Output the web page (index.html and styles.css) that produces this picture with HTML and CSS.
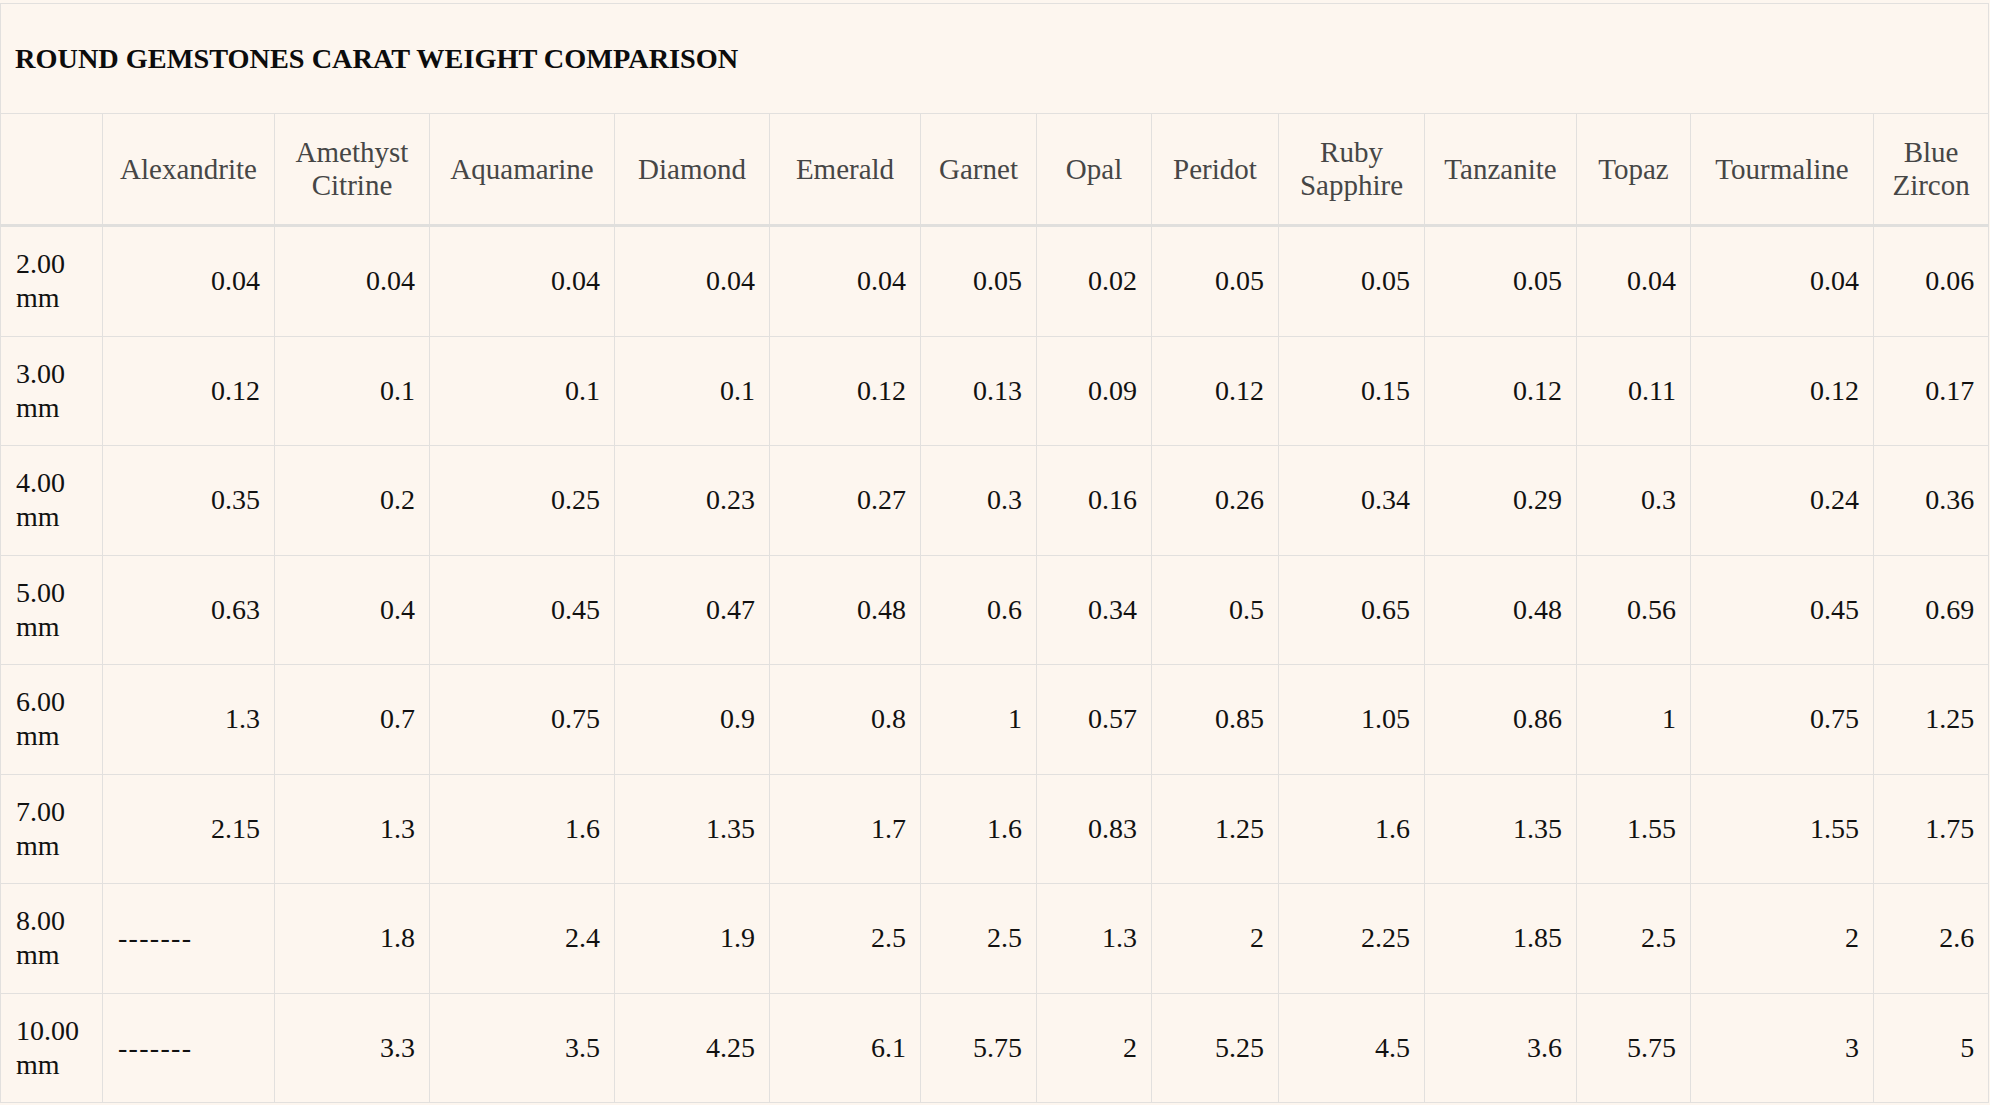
FILE: index.html
```html
<!DOCTYPE html>
<html lang="en">
<head>
<meta charset="utf-8">
<title>Round Gemstones Carat Weight Comparison</title>
<link rel="stylesheet" href="styles.css">
</head>
<body>
<table class="gems">
  <colgroup>
    <col class="c-size">
    <col class="c-alex">
    <col class="c-amet">
    <col class="c-aqua">
    <col class="c-diam">
    <col class="c-emer">
    <col class="c-garn">
    <col class="c-opal">
    <col class="c-peri">
    <col class="c-ruby">
    <col class="c-tanz">
    <col class="c-topa">
    <col class="c-tour">
    <col class="c-zirc">
  </colgroup>
  <thead>
    <tr class="title-row"><th class="title" colspan="14">ROUND GEMSTONES CARAT WEIGHT COMPARISON</th></tr>
    <tr class="head-row">
      <th></th>
      <th>Alexandrite</th>
      <th>Amethyst Citrine</th>
      <th>Aquamarine</th>
      <th>Diamond</th>
      <th>Emerald</th>
      <th>Garnet</th>
      <th>Opal</th>
      <th>Peridot</th>
      <th>Ruby Sapphire</th>
      <th>Tanzanite</th>
      <th>Topaz</th>
      <th>Tourmaline</th>
      <th>Blue Zircon</th>
    </tr>
  </thead>
  <tbody>
    <tr><td class="size">2.00 mm</td><td>0.04</td><td>0.04</td><td>0.04</td><td>0.04</td><td>0.04</td><td>0.05</td><td>0.02</td><td>0.05</td><td>0.05</td><td>0.05</td><td>0.04</td><td>0.04</td><td>0.06</td></tr>
    <tr><td class="size">3.00 mm</td><td>0.12</td><td>0.1</td><td>0.1</td><td>0.1</td><td>0.12</td><td>0.13</td><td>0.09</td><td>0.12</td><td>0.15</td><td>0.12</td><td>0.11</td><td>0.12</td><td>0.17</td></tr>
    <tr><td class="size">4.00 mm</td><td>0.35</td><td>0.2</td><td>0.25</td><td>0.23</td><td>0.27</td><td>0.3</td><td>0.16</td><td>0.26</td><td>0.34</td><td>0.29</td><td>0.3</td><td>0.24</td><td>0.36</td></tr>
    <tr><td class="size">5.00 mm</td><td>0.63</td><td>0.4</td><td>0.45</td><td>0.47</td><td>0.48</td><td>0.6</td><td>0.34</td><td>0.5</td><td>0.65</td><td>0.48</td><td>0.56</td><td>0.45</td><td>0.69</td></tr>
    <tr><td class="size">6.00 mm</td><td>1.3</td><td>0.7</td><td>0.75</td><td>0.9</td><td>0.8</td><td>1</td><td>0.57</td><td>0.85</td><td>1.05</td><td>0.86</td><td>1</td><td>0.75</td><td>1.25</td></tr>
    <tr><td class="size">7.00 mm</td><td>2.15</td><td>1.3</td><td>1.6</td><td>1.35</td><td>1.7</td><td>1.6</td><td>0.83</td><td>1.25</td><td>1.6</td><td>1.35</td><td>1.55</td><td>1.55</td><td>1.75</td></tr>
    <tr><td class="size">8.00 mm</td><td class="na">-------</td><td>1.8</td><td>2.4</td><td>1.9</td><td>2.5</td><td>2.5</td><td>1.3</td><td>2</td><td>2.25</td><td>1.85</td><td>2.5</td><td>2</td><td>2.6</td></tr>
    <tr><td class="size">10.00 mm</td><td class="na">-------</td><td>3.3</td><td>3.5</td><td>4.25</td><td>6.1</td><td>5.75</td><td>2</td><td>5.25</td><td>4.5</td><td>3.6</td><td>5.75</td><td>3</td><td>5</td></tr>
  </tbody>
</table>
</body>
</html>
```

FILE: styles.css
```css
html, body {
  margin: 0;
  padding: 0;
  background: #fdf6ef;
}

body {
  padding-top: 3px;
  font-family: "Liberation Serif", "Times New Roman", serif;
  color: #111;
}

.gems {
  width: 1989px;
  table-layout: fixed;
  border-collapse: collapse;
  background: #fdf6ef;
}

.c-size { width: 102px; }
.c-alex { width: 172px; }
.c-amet { width: 155px; }
.c-aqua { width: 185px; }
.c-diam { width: 155px; }
.c-emer { width: 151px; }
.c-garn { width: 116px; }
.c-opal { width: 115px; }
.c-peri { width: 127px; }
.c-ruby { width: 146px; }
.c-tanz { width: 152px; }
.c-topa { width: 114px; }
.c-tour { width: 183px; }
.c-zirc { width: 115px; }

.gems th,
.gems td {
  border: 1px solid #e2e0de;
  padding: 0 14px;
  vertical-align: middle;
  line-height: 34px;
}

.title {
  height: 109px;
  text-align: left;
  font-size: 28.3px;
  font-weight: bold;
  color: #0c0c0c;
  padding-left: 15px;
}

.head-row th {
  height: 110px;
  font-size: 29px;
  font-weight: normal;
  color: #464646;
  text-align: center;
  line-height: 33px;
  border-bottom: 3px solid #e0dfdd;
}

.gems td {
  height: 108.5px;
  font-size: 28px;
  text-align: right;
}

.gems td.size {
  text-align: left;
  padding-left: 15px;
}

.gems td.na {
  text-align: left;
  padding-left: 15px;
  letter-spacing: 1.3px;
}
```
